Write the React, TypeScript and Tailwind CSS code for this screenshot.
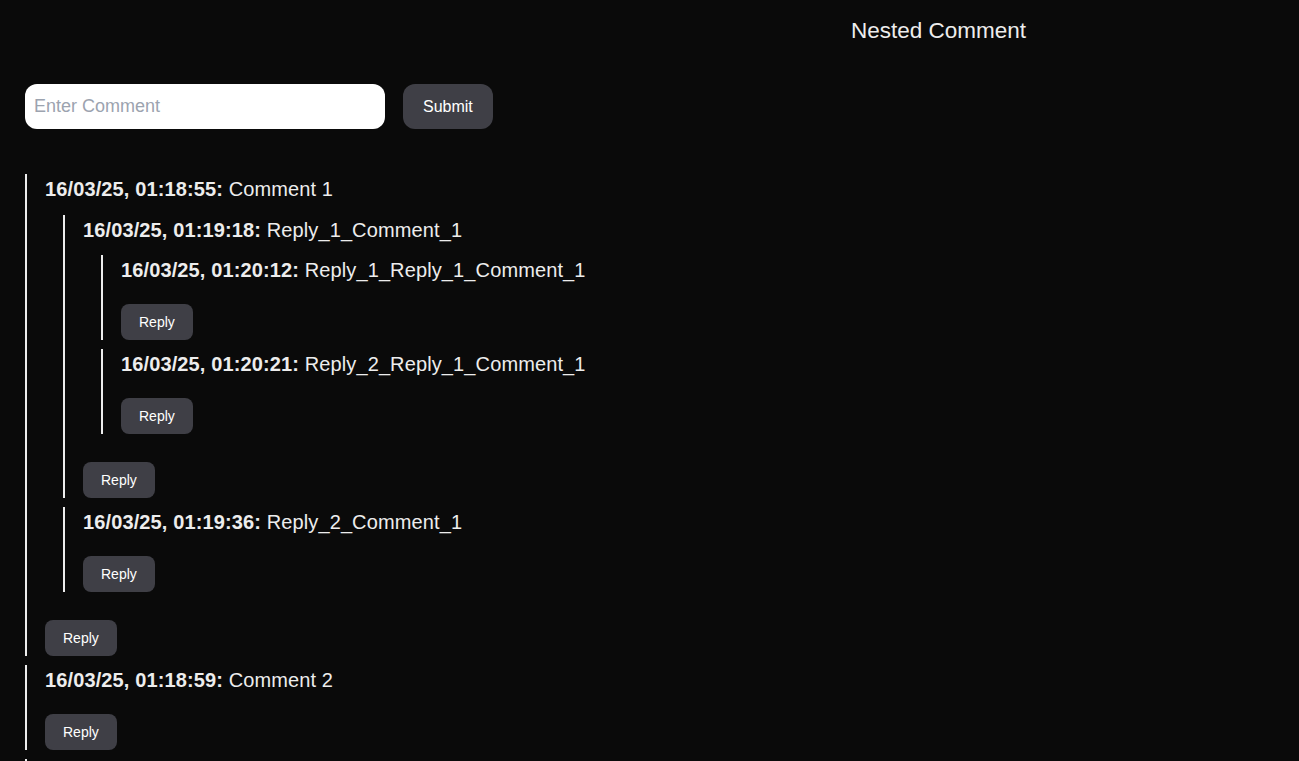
import React, { useState } from 'react';

type CommentNode = {
    id: number;
    time: string;
    text: string;
    replies: CommentNode[];
};

const initialComments: CommentNode[] = [
    {
        id: 1,
        time: '16/03/25, 01:18:55',
        text: 'Comment 1',
        replies: [
            {
                id: 3,
                time: '16/03/25, 01:19:18',
                text: 'Reply_1_Comment_1',
                replies: [
                    { id: 5, time: '16/03/25, 01:20:12', text: 'Reply_1_Reply_1_Comment_1', replies: [] },
                    { id: 6, time: '16/03/25, 01:20:21', text: 'Reply_2_Reply_1_Comment_1', replies: [] },
                ],
            },
            { id: 4, time: '16/03/25, 01:19:36', text: 'Reply_2_Comment_1', replies: [] },
        ],
    },
    { id: 2, time: '16/03/25, 01:18:59', text: 'Comment 2', replies: [] },
    { id: 7, time: '16/03/25, 01:19:05', text: 'Comment 3', replies: [] },
];

const CommentItem: React.FC<{ comment: CommentNode }> = ({ comment }) => {
    return (
        <div className="flex flex-col items-start border-l-2 border-[#ededed] pl-[18px] mb-[9px]">
            <p className="text-xl leading-[30px] tracking-[0.12px]">
                <span className="font-bold">{comment.time}:</span> {comment.text}
            </p>
            {comment.replies.length > 0 && (
                <div className="w-full pl-[18px] mt-[10.5px]">
                    {comment.replies.map((reply) => (
                        <CommentItem key={reply.id} comment={reply} />
                    ))}
                </div>
            )}
            <button className="mt-[19px] rounded-lg bg-[#3f3f46] px-[18px] py-2 text-sm text-white">
                Reply
            </button>
        </div>
    );
};

const App: React.FC = () => {
    const [value, setValue] = useState('');

    return (
        <div
            className="min-h-screen bg-[#0a0a0a] text-[#ededed]"
            style={{ fontFamily: '"Liberation Sans", Arial, Helvetica, sans-serif' }}
        >
            <h1 className="pt-[15px] pl-[851px] text-[22.5px] leading-8">Nested Comment</h1>
            <div className="px-[25px]">
                <div className="mt-[37px] flex items-center gap-[18px]">
                    <input
                        value={value}
                        onChange={(e) => setValue(e.target.value)}
                        placeholder="Enter Comment"
                        className="h-[45px] w-[360px] rounded-xl bg-white px-[9px] text-lg text-black placeholder:text-[#9ca3af] outline-none"
                    />
                    <button className="h-[45px] rounded-xl bg-[#3f3f46] px-5 text-base text-white">
                        Submit
                    </button>
                </div>
                <div className="mt-[45px]">
                    {initialComments.map((comment) => (
                        <CommentItem key={comment.id} comment={comment} />
                    ))}
                </div>
            </div>
        </div>
    );
};

export default App;
